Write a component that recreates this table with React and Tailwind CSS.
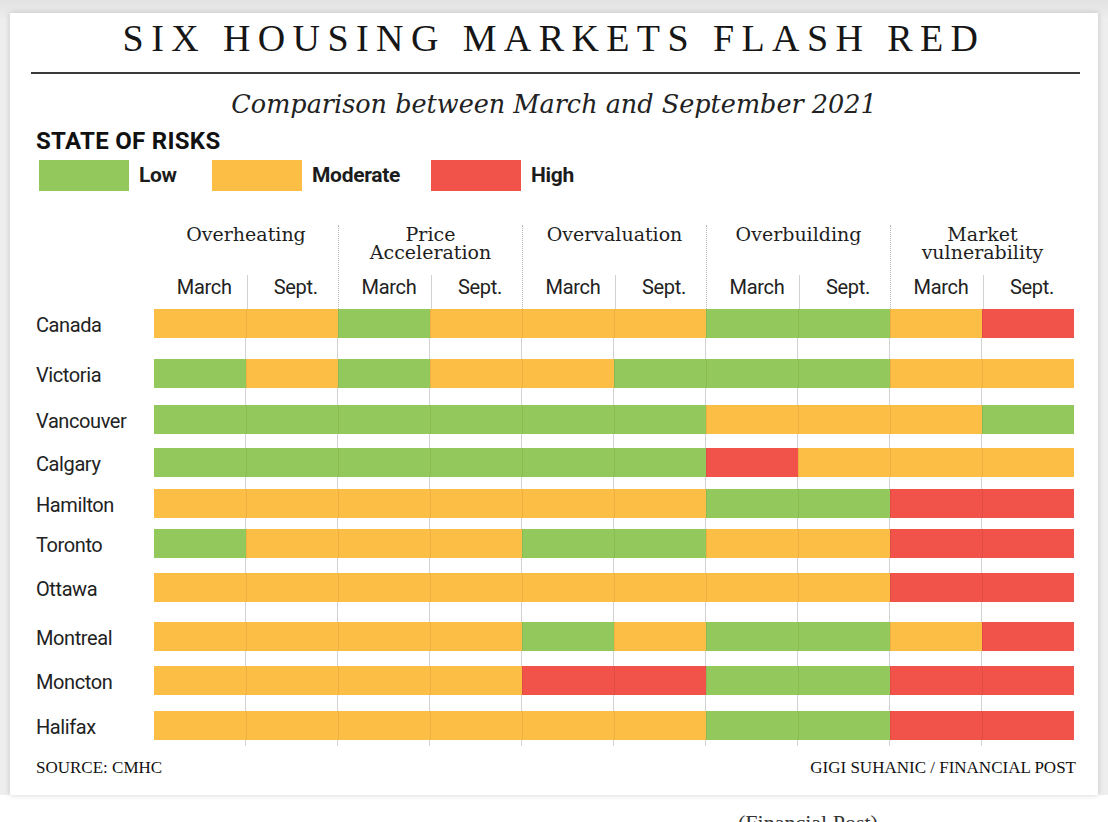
const COLORS = {
  G: "bg-[#93c95c]",
  O: "bg-[#fdbe45]",
  R: "bg-[#f1534b]",
}

const groups = [
  ["Overheating"],
  ["Price", "Acceleration"],
  ["Overvaluation"],
  ["Overbuilding"],
  ["Market", "vulnerability"],
]

const rows = [
  ["Canada", "pt-[0px]", "OOGOOOGGOR"],
  ["Victoria", "pt-[21px]", "GOGOOGGGOO"],
  ["Vancouver", "pt-[17px]", "GGGGGGOOOG"],
  ["Calgary", "pt-[14px]", "GGGGGGROOO"],
  ["Hamilton", "pt-[12px]", "OOOOOOGGRR"],
  ["Toronto", "pt-[11px]", "GOOOGGOORR"],
  ["Ottawa", "pt-[15px]", "OOOOOOOORR"],
  ["Montreal", "pt-[20px]", "OOOOGOGGOR"],
  ["Moncton", "pt-[15px]", "OOOORRGGRR"],
  ["Halifax", "pt-[16px]", "OOOOOOGGRR"],
]

const sans = "font-['Roboto',sans-serif]"
const gridLines =
  "bg-[linear-gradient(to_right,transparent_91px,#d2d2d2_91px,#d2d2d2_92px)] bg-size-[92px_100%] bg-repeat-x"

function Legend({ color, label, width }) {
  return (
    <div className={`flex items-center ${width}`}>
      <div className={`w-[90px] h-[31px] ${color}`} />
      <span className={`ml-[10px] text-[21px] font-bold text-[#1c1c1c] tracking-[-0.3px] ${sans}`}>{label}</span>
    </div>
  )
}

function Row({ name, gap, data }) {
  return (
    <div className="flex">
      <div className="w-[118px] flex items-end">
        <span className={`h-[29px] leading-[33px] text-[20px] tracking-[-0.4px] text-[#222] ${sans}`}>{name}</span>
      </div>
      <div className={`w-[919px] ${gap} ${gridLines}`}>
        <div className="flex w-[920px]">
          {data.split("").map((c, i) => (
            <div
              key={i}
              className={`w-[92px] h-[29px] ${COLORS[c]} ${i > 0 ? "border-l border-black/[0.07]" : ""}`}
            />
          ))}
        </div>
      </div>
    </div>
  )
}

export default function App() {
  return (
    <div className="w-[1108px] h-[822px] overflow-hidden bg-white">
      <div className="bg-[linear-gradient(to_bottom,#e2e2e2,#eeeeee_20px)] pt-[13px] px-[10px]">
        <div className="w-[1088px] h-[782px] bg-white shadow-[0_0_6px_rgba(0,0,0,0.18)] pt-[3px]">
          <h1 className="text-center text-[38px] leading-[44px] tracking-[7.4px] text-[#161616] font-['Liberation_Serif',serif]">
            SIX HOUSING MARKETS FLASH RED
          </h1>
          <div className="mt-[12px] ml-[21px] mr-[18px] h-[2px] bg-[#3a3a3a]" />
          <p className="mt-[14px] text-center text-[25.5px] leading-[32px] italic text-[#222] font-['DejaVu_Serif',serif]">
            Comparison between March and September 2021
          </p>

          <div className="pl-[26px]">
            <h2 className={`mt-[8px] text-[24px] leading-[26px] font-bold tracking-[0.3px] text-[#111] ${sans}`}>
              STATE OF RISKS
            </h2>
            <div className="mt-[6px] ml-[3px] flex">
              <Legend color={COLORS.G} label="Low" width="w-[173px]" />
              <Legend color={COLORS.O} label="Moderate" width="w-[219px]" />
              <Legend color={COLORS.R} label="High" width="w-[200px]" />
            </div>

            <div className="mt-[33px] flex">
              <div className="w-[118px]" />
              {groups.map((g, gi) => (
                <div
                  key={gi}
                  className={`w-[184px] flex flex-col ${gi > 0 ? "border-l border-dotted border-[#b8b8b8]" : ""}`}
                >
                  <div className="h-[45px] text-center text-[19px] leading-[18px] text-[#1e1e1e] font-['DejaVu_Serif',serif]">
                    {g.map((line) => (
                      <div key={line}>{line}</div>
                    ))}
                  </div>
                  <div className="pt-[5px] flex">
                    <div className={`flex-1 h-[34px] pl-[8px] text-center text-[20px] leading-[24px] tracking-[-0.3px] text-[#222] ${sans}`}>
                      March
                    </div>
                    <div
                      className={`flex-1 h-[34px] pl-[6px] text-center text-[20px] leading-[24px] tracking-[-0.3px] text-[#222] border-l border-[#d2d2d2] ${sans}`}
                    >
                      Sept.
                    </div>
                  </div>
                </div>
              ))}
            </div>

            {rows.map(([name, gap, data]) => (
              <Row key={name} name={name} gap={gap} data={data} />
            ))}
            <div className={`ml-[118px] w-[919px] h-[6px] ${gridLines}`} />

            <div className="mt-[12px] pr-[22px] flex justify-between text-[17px] leading-[20px] text-[#111] font-['Liberation_Serif',serif]">
              <span>SOURCE: CMHC</span>
              <span>GIGI SUHANIC / FINANCIAL POST</span>
            </div>
          </div>
        </div>
      </div>
      <div className="pl-[738px] pt-[16px] text-[22px] leading-[24px] text-[#333] font-['Liberation_Serif',serif]">
        (Financial Post)
      </div>
    </div>
  )
}
